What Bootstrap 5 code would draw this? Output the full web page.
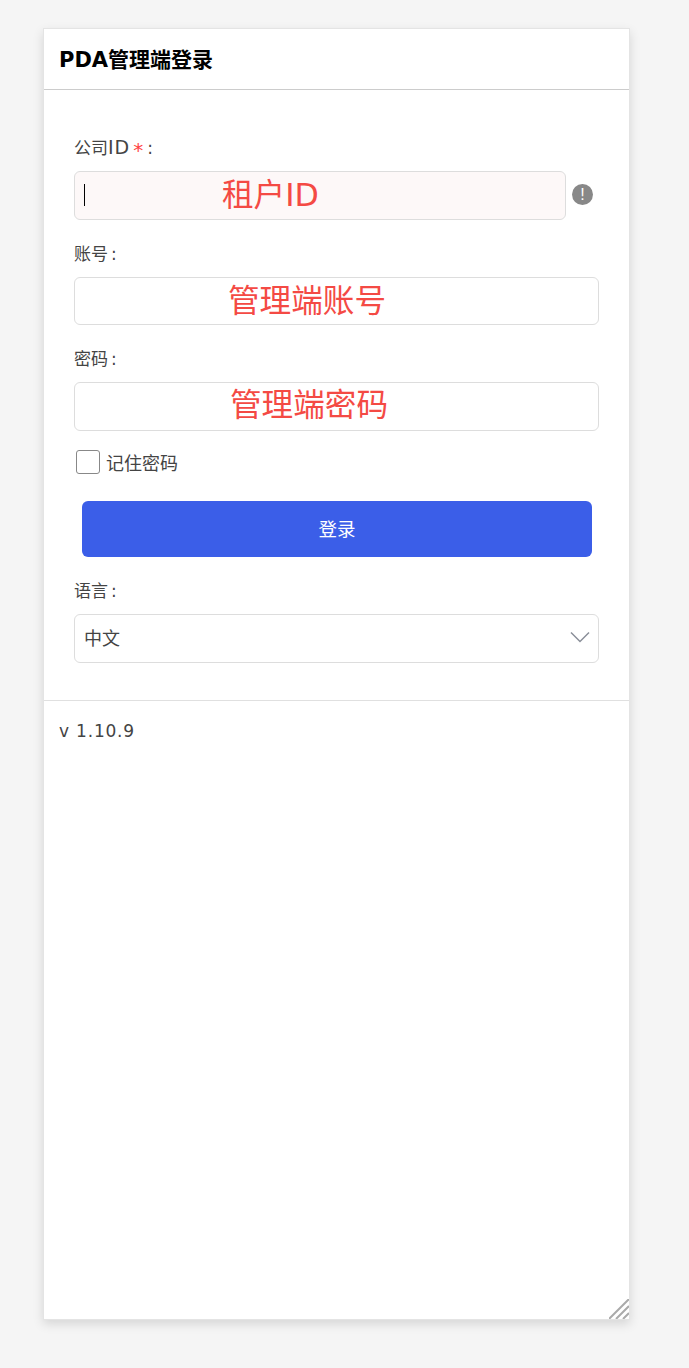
<!DOCTYPE html>
<html lang="zh"><head><meta charset="utf-8"><title>PDA管理端登录</title>
<link href="https://cdn.jsdelivr.net/npm/bootstrap@5.3.0/dist/css/bootstrap.min.css" rel="stylesheet">
<style>
html,body{height:100%}
body{background:#f5f5f5;font-family:"DejaVu Sans","Noto Sans CJK SC",sans-serif;color:#444;font-size:16px;overflow:hidden}
.shell{width:587px;height:1292px;margin:28px 0 0 43px;position:relative;background:#fff;border:1px solid #e4e4e4;box-shadow:0 4px 10px rgba(0,0,0,.13)}
.shell-head{height:61px;padding-left:15px;padding-top:3px;border-bottom:1px solid #ccc;font-size:21px;font-weight:700;color:#000;line-height:1}
.shell-body{padding:44px 30px 37px;border-bottom:1px solid #e0e0e0}
.lbl{font-size:17px;line-height:26px;height:24px;margin-bottom:13px;color:#444}
.lbl .latin{font-size:19px;letter-spacing:1px}
.lbl .req{color:#f44;margin:0 4px 0 3px;font-size:20px;line-height:1;vertical-align:-3px}
.lbl .col{margin-left:3px}
.lbl-acct,.lbl-pw,.lbl-lang{margin-bottom:12px}
.fld{position:relative;height:49px;border:1px solid #ddd;border-radius:6px;background:#fff;margin-bottom:19px}
.fld-acct{height:48px;margin-bottom:21px}
.fld.tint{background:#fdf8f8;width:492px;margin:0}
.id-row{margin-bottom:21px}
.hint{position:absolute;top:50%;transform:translateY(-50%);color:#f44a44;font-family:"DejaVu Sans","Noto Sans CJK SC",sans-serif;font-size:31.6px;line-height:1;white-space:nowrap;font-weight:400}
.hint-id{left:147px}
.hint-acct{left:153px;transform:translateY(calc(-50% + 1px))}
.hint-pw{left:155px;transform:translateY(calc(-50% - 1px))}
.caret-bar{position:absolute;left:9px;top:12px;width:1px;height:22px;background:#000}
.tip{width:21px;height:21px;border-radius:50%;background:#888;color:#fff;font-family:"Liberation Sans",sans-serif;font-size:16px;line-height:21px;text-align:center;margin-left:6px;margin-bottom:3px}
.box{width:24px;height:24px;border:1px solid #888;border-radius:3px;margin-left:2px;margin-right:6px;background:#fff}
.rem{height:24px;margin-bottom:27px;font-family:"Noto Sans CJK SC",sans-serif;font-size:18px;line-height:24px;color:#444}
.go{display:block;width:510px;height:56px;margin:0 0 21px 8px;background:#3b5ee8;border:0;border-radius:6px;color:#fff;font-family:"Noto Sans CJK SC",sans-serif;font-size:18.5px}
.go:hover,.go:active{background:#3b5ee8!important;color:#fff!important}
.sel{height:49px;padding:0 8px 2px 9px;border:1px solid #ddd;border-radius:6px;font-family:"Noto Sans CJK SC",sans-serif;font-size:18px;color:#444;margin:0}
.sel svg{margin-bottom:2px}
.ver{padding:19px 15px 0;font-size:17px;letter-spacing:.8px;line-height:22px;color:#444}
.grip{position:absolute;right:0;bottom:0}
</style></head>
<body>
<div class="shell">
  <div class="shell-head d-flex align-items-center">PDA管理端登录</div>
  <div class="shell-body">
    <div class="lbl">公司<span class="latin">ID</span><span class="req">*</span>:</div>
    <div class="id-row d-flex align-items-center">
      <div class="fld tint"><span class="caret-bar"></span><span class="hint hint-id">租户ID</span></div>
      <div class="tip">!</div>
    </div>
    <div class="lbl lbl-acct">账号<span class="col">:</span></div>
    <div class="fld fld-acct"><span class="hint hint-acct">管理端账号</span></div>
    <div class="lbl lbl-pw">密码<span class="col">:</span></div>
    <div class="fld"><span class="hint hint-pw">管理端密码</span></div>
    <div class="rem d-flex align-items-center"><span class="box"></span>记住密码</div>
    <button class="btn go" type="button">登录</button>
    <div class="lbl lbl-lang">语言<span class="col">:</span></div>
    <div class="sel d-flex align-items-center justify-content-between">中文
      <svg width="20" height="12" viewBox="0 0 20 12"><path d="M1 1.5 10 10.5 19 1.5" fill="none" stroke="#8a8f99" stroke-width="1.5"/></svg>
    </div>
  </div>
  <div class="ver">v 1.10.9</div>
  <svg class="grip" width="20" height="20" viewBox="0 0 20 20"><path d="M0 20 20 0M7 20 20 7M14 20 20 14" stroke="#aaa" stroke-width="2" fill="none"/></svg>
</div>
<script src="https://cdn.jsdelivr.net/npm/bootstrap@5.3.0/dist/js/bootstrap.bundle.min.js"></script>
</body></html>
